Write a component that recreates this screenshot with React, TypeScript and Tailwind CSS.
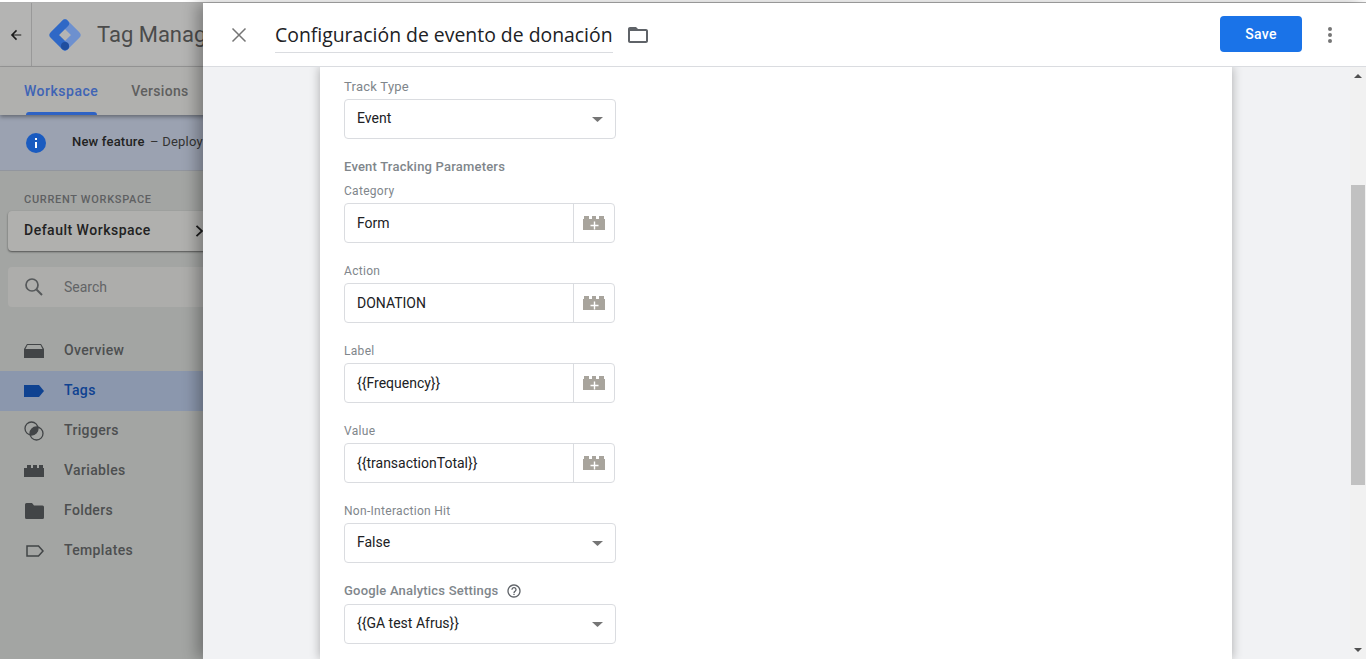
const roboto = "font-['Roboto','Liberation_Sans',sans-serif]";

function VariableIcon() {
  return (
    <svg width="24" height="24" viewBox="0 0 24 24" fill="none">
      <path d="M1 8h1V5h5v3h3V5h4v3h3V5h5v3h1v11H1z" fill="#a8a49c" />
      <path d="M12.500 10.500v8M8.500 14.500h8" stroke="#fff" strokeWidth="1.400" />
    </svg>
  );
}

function Caret() {
  return (
    <svg width="11" height="5" viewBox="0 0 11 5" className="ml-auto">
      <path d="M0 0h11L5.500 5z" fill="#757575" />
    </svg>
  );
}

function Label({ text, className = '' }: { text: string; className?: string }) {
  return <div className={`text-[12px] leading-4 text-[#80868b] tracking-[0.3px] ${className}`}>{text}</div>;
}

function SelectField({ value }: { value: string }) {
  return (
    <div className="flex h-10 w-[272px] items-center rounded border border-[#dadce0] pl-3 pr-[12px] text-[14px] text-[#202124]">
      <span className="mb-[2px]">{value}</span>
      <Caret />
    </div>
  );
}

function TextField({ value }: { value: string }) {
  return (
    <div className="flex h-10 w-[271px] items-center rounded border border-[#dadce0] text-[14px] text-[#202124]">
      <div className="flex-1 pl-3">{value}</div>
      <div className="flex h-full w-[41px] items-center justify-center border-l border-[#dadce0]">
        <VariableIcon />
      </div>
    </div>
  );
}

function NavItem({ label, active, icon }: { label: string; active?: boolean; icon: React.ReactNode }) {
  return (
    <div className={`flex h-10 items-center pl-6 ${active ? 'bg-[#8b97ad] text-[#0f4291]' : 'text-[#4d4f50]'}`}>
      <span className="flex w-10 items-center">{icon}</span>
      <span className="mb-[2px] text-[14px] font-medium tracking-[0.35px]">{label}</span>
    </div>
  );
}

function Sidebar() {
  const dark = '#424547';
  return (
    <div className="flex h-full w-[203px] shrink-0 flex-col overflow-hidden bg-[#a3a5a3]">
      <div className="flex h-[64px] w-[340px] shrink-0 items-center border-b border-[#989898] bg-[#b4b4b3]">
        <div className="flex h-full w-8 items-center justify-center border-r border-[#999]">
          <svg width="14" height="14" viewBox="0 0 24 24">
            <path d="M21 11H7.800l6-6L12 3.200 3.200 12l8.800 8.800L13.800 19l-6-6H21z" fill="#1a1a1a" />
          </svg>
        </div>
        <svg width="32" height="32" viewBox="0 0 32 32" fill="none" className="ml-[17px] shrink-0">
          <path d="M16 4.500L27.500 16 16 27.500" stroke="#6d90cf" strokeWidth="8" strokeLinejoin="round" strokeLinecap="round" />
          <path d="M16 4.500L4.500 16 16 27.500" stroke="#2f68c6" strokeWidth="8" strokeLinejoin="round" strokeLinecap="round" />
          <circle cx="16" cy="27" r="4" fill="#1f4e9f" />
        </svg>
        <span className="ml-4 whitespace-nowrap text-[22px] text-[#4b4b4b]">Tag Manager</span>
      </div>

      <div className="relative z-10 flex h-12 w-[340px] shrink-0 bg-[#b0b0ae] shadow-[0_2px_4px_rgba(0,0,0,0.35)]">
        <div className="relative ml-6 flex items-center text-[14px] font-medium tracking-[0.5px] text-[#3f64b5]">
          Workspace
          <div className="absolute bottom-0 left-[2px] h-[3px] w-[71px] rounded-t-[3px] bg-[#2e62c4]" />
        </div>
        <div className="ml-[33px] flex items-center text-[14px] font-medium tracking-[0.3px] text-[#5f5f5f]">Versions</div>
      </div>

      <div className="flex h-14 w-[340px] shrink-0 items-center border-b border-[#92969e] bg-[#9ba2b1] pl-[26px]">
        <svg width="20" height="20" viewBox="0 0 20 20">
          <circle cx="10" cy="10" r="10" fill="#1a5bc0" />
          <path d="M9 9h2v6H9zM9 5h2v2H9z" fill="#fff" />
        </svg>
        <span className="mb-[2px] ml-[26px] whitespace-nowrap text-[13px] tracking-[0.2px] text-[#222]">
          <span className="font-medium">New feature</span>
          <span className="ml-[2px] text-[#333]"> – Deploy to production</span>
        </span>
      </div>

      <div className="pl-6 pt-[21px] text-[11px] font-medium leading-4 tracking-[0.7px] text-[#5e6062]">CURRENT WORKSPACE</div>
      <div className="ml-2 mt-[3px] flex h-10 w-[230px] shrink-0 items-center rounded bg-[#b0b0ae] pl-4 text-[14px] font-medium tracking-[0.5px] text-[#222] shadow-[0_1px_2px_rgba(0,0,0,0.5)]">
        <span className="mb-[1px]">Default Workspace</span>
        <svg width="10" height="12" viewBox="0 0 10 12" className="ml-[44px]">
          <path d="M1.500 0.800L7 6l-5.500 5.200" stroke="#1c1c1c" strokeWidth="1.800" fill="none" />
        </svg>
      </div>

      <div className="ml-2 mt-4 flex h-10 w-[230px] shrink-0 items-center rounded bg-[#adadab] pl-4 text-[14px] text-[#626466]">
        <svg width="20" height="20" viewBox="0 0 20 20">
          <circle cx="8" cy="8" r="6" stroke="#55585a" strokeWidth="1.700" fill="none" />
          <path d="M12.500 12.500L18 18" stroke="#55585a" strokeWidth="1.900" />
        </svg>
        <span className="ml-5">Search</span>
      </div>

      <div className="mt-[24px] flex flex-col">
        <NavItem
          label="Overview"
          icon={
            <svg width="20" height="14" viewBox="0 0 20 14">
              <path d="M3 0h14l3 5v9H0V5z" fill={dark} />
              <path d="M3.500 1h13L18.500 5h-17z" fill="#a3a5a3" />
            </svg>
          }
        />
        <NavItem
          active
          label="Tags"
          icon={
            <svg width="20" height="12" viewBox="0 0 20 12">
              <path d="M0 0h15l5 6-5 6H0z" fill="#0f4291" />
            </svg>
          }
        />
        <NavItem
          label="Triggers"
          icon={
            <svg width="20" height="20" viewBox="0 0 20 20" fill="none">
              <circle cx="7.500" cy="7.500" r="6.500" stroke={dark} strokeWidth="1.300" />
              <circle cx="12.500" cy="12.500" r="6.500" stroke={dark} strokeWidth="1.300" />
              <path d="M13.860 6.140A6.500 6.500 0 0 1 6.140 13.860A6.500 6.500 0 0 1 13.860 6.140z" fill={dark} />
            </svg>
          }
        />
        <NavItem
          label="Variables"
          icon={
            <svg width="20" height="12" viewBox="0 0 20 12">
              <path d="M0 3h3V0h4v3h2V0h4v3h2V0h4v3h1v9H0z" fill={dark} />
            </svg>
          }
        />
        <NavItem
          label="Folders"
          icon={
            <svg width="20" height="16" viewBox="0 0 20 16" className="ml-[1px]">
              <path d="M1.500 0H7l2 2.500h8.500A1.500 1.500 0 0 1 19 4v10.500a1.500 1.500 0 0 1-1.500 1.500h-16A1.500 1.500 0 0 1 0 14.500v-13A1.500 1.500 0 0 1 1.500 0z" fill={dark} />
            </svg>
          }
        />
        <NavItem
          label="Templates"
          icon={
            <svg width="18" height="12" viewBox="0 0 18 12" className="ml-[2px]">
              <path d="M1 1h11.500L17 6l-4.500 5H1z" fill="none" stroke={dark} strokeWidth="1.500" />
            </svg>
          }
        />
      </div>
    </div>
  );
}

function Header() {
  return (
    <div className="flex h-16 shrink-0 items-center border-b border-[#dadce0] bg-white">
      <svg width="16" height="16" viewBox="0 0 16 16" className="ml-7">
        <path d="M1.500 1.500l13 13M14.500 1.500l-13 13" stroke="#757575" strokeWidth="1.500" />
      </svg>
      <div className="ml-7 flex h-9 w-[338px] items-center self-end border-b border-[#dadce0] mb-[13px] font-['Open_Sans',sans-serif] text-[19.400px] text-[#202124] whitespace-nowrap">
        Configuración de evento de donación
      </div>
      <svg width="24" height="24" viewBox="0 0 24 24" className="ml-[13px]">
        <path d="M20 6h-8l-2-2H4c-1.100 0-2 .9-2 2v12c0 1.100.9 2 2 2h16c1.100 0 2-.9 2-2V8c0-1.100-.9-2-2-2zm0 12H4V8h16v10z" fill="#5f6368" />
      </svg>
      <button className="mb-[2px] ml-auto h-9 w-[82px] rounded bg-[#1a73e8] pt-[2px] text-[14px] font-medium tracking-[0.3px] text-white">Save</button>
      <svg width="4" height="16" viewBox="0 0 4 16" className="ml-[26px] mr-[34px]">
        <circle cx="2" cy="2" r="2" fill="#757575" />
        <circle cx="2" cy="8" r="2" fill="#757575" />
        <circle cx="2" cy="14" r="2" fill="#757575" />
      </svg>
    </div>
  );
}

function FormCard() {
  return (
    <div className="h-full w-[912px] shrink-0 overflow-hidden bg-white pl-6 pt-3 shadow-[0_0_10px_rgba(0,0,0,0.3)]">
      <div className="mb-1 text-[13px] leading-4 tracking-[0.25px] text-[#80868b]">Track Type</div>
      <SelectField value="Event" />
      <div className="mt-5 text-[13px] font-medium leading-4 tracking-[0.2px] text-[#80868b]">Event Tracking Parameters</div>
      <Label text="Category" className="mt-2 mb-1" />
      <TextField value="Form" />
      <Label text="Action" className="mt-5 mb-1" />
      <TextField value="DONATION" />
      <Label text="Label" className="mt-5 mb-1" />
      <TextField value="{{Frequency}}" />
      <Label text="Value" className="mt-5 mb-1" />
      <TextField value="{{transactionTotal}}" />
      <Label text="Non-Interaction Hit" className="mt-5 mb-1" />
      <SelectField value="False" />
      <div className="mt-5 mb-[5px] flex items-center text-[13px] font-medium leading-4 tracking-[0.2px] text-[#80868b]">
        Google Analytics Settings
        <svg width="16" height="16" viewBox="0 0 24 24" className="ml-[8px]">
          <path d="M11 18h2v-2h-2v2zm1-16C6.480 2 2 6.480 2 12s4.480 10 10 10 10-4.480 10-10S17.520 2 12 2zm0 18c-4.410 0-8-3.590-8-8s3.590-8 8-8 8 3.590 8 8-3.590 8-8 8zm0-14c-2.210 0-4 1.790-4 4h2c0-1.100.9-2 2-2s2 .9 2 2c0 2-3 1.750-3 5h2c0-2.250 3-2.500 3-5 0-2.210-1.790-4-4-4z" fill="#5f6368" />
        </svg>
      </div>
      <SelectField value="{{GA test Afrus}}" />
    </div>
  );
}

function Scrollbar() {
  return (
    <div className="flex h-full w-4 shrink-0 flex-col items-center bg-[#f1f1f1]">
      <svg width="8" height="4" viewBox="0 0 8 4" className="mt-[7px] shrink-0">
        <path d="M4 0l4 4H0z" fill="#505050" />
      </svg>
      <div className="mt-[107px] h-[300px] w-[14px] shrink-0 bg-[#c1c1c1]" />
      <svg width="8" height="4" viewBox="0 0 8 4" className="mt-auto mb-[7px] shrink-0">
        <path d="M0 0h8L4 4z" fill="#505050" />
      </svg>
    </div>
  );
}

export default function App() {
  return (
    <div className={`flex h-[659px] w-[1366px] flex-col overflow-hidden bg-white ${roboto}`}>
      <div className="mt-[2px] h-px shrink-0 bg-[#b0b0b0]" />
      <div className="flex min-h-0 flex-1">
        <Sidebar />
        <div className="relative z-10 flex min-w-0 flex-1 flex-col bg-[#f1f2f4] shadow-[-6px_0_14px_rgba(0,0,0,0.3)]">
          <Header />
          <div className="flex min-h-0 flex-1">
            <div className="flex min-w-0 flex-1 overflow-hidden pl-[117px]">
              <FormCard />
            </div>
            <Scrollbar />
          </div>
        </div>
      </div>
    </div>
  );
}
